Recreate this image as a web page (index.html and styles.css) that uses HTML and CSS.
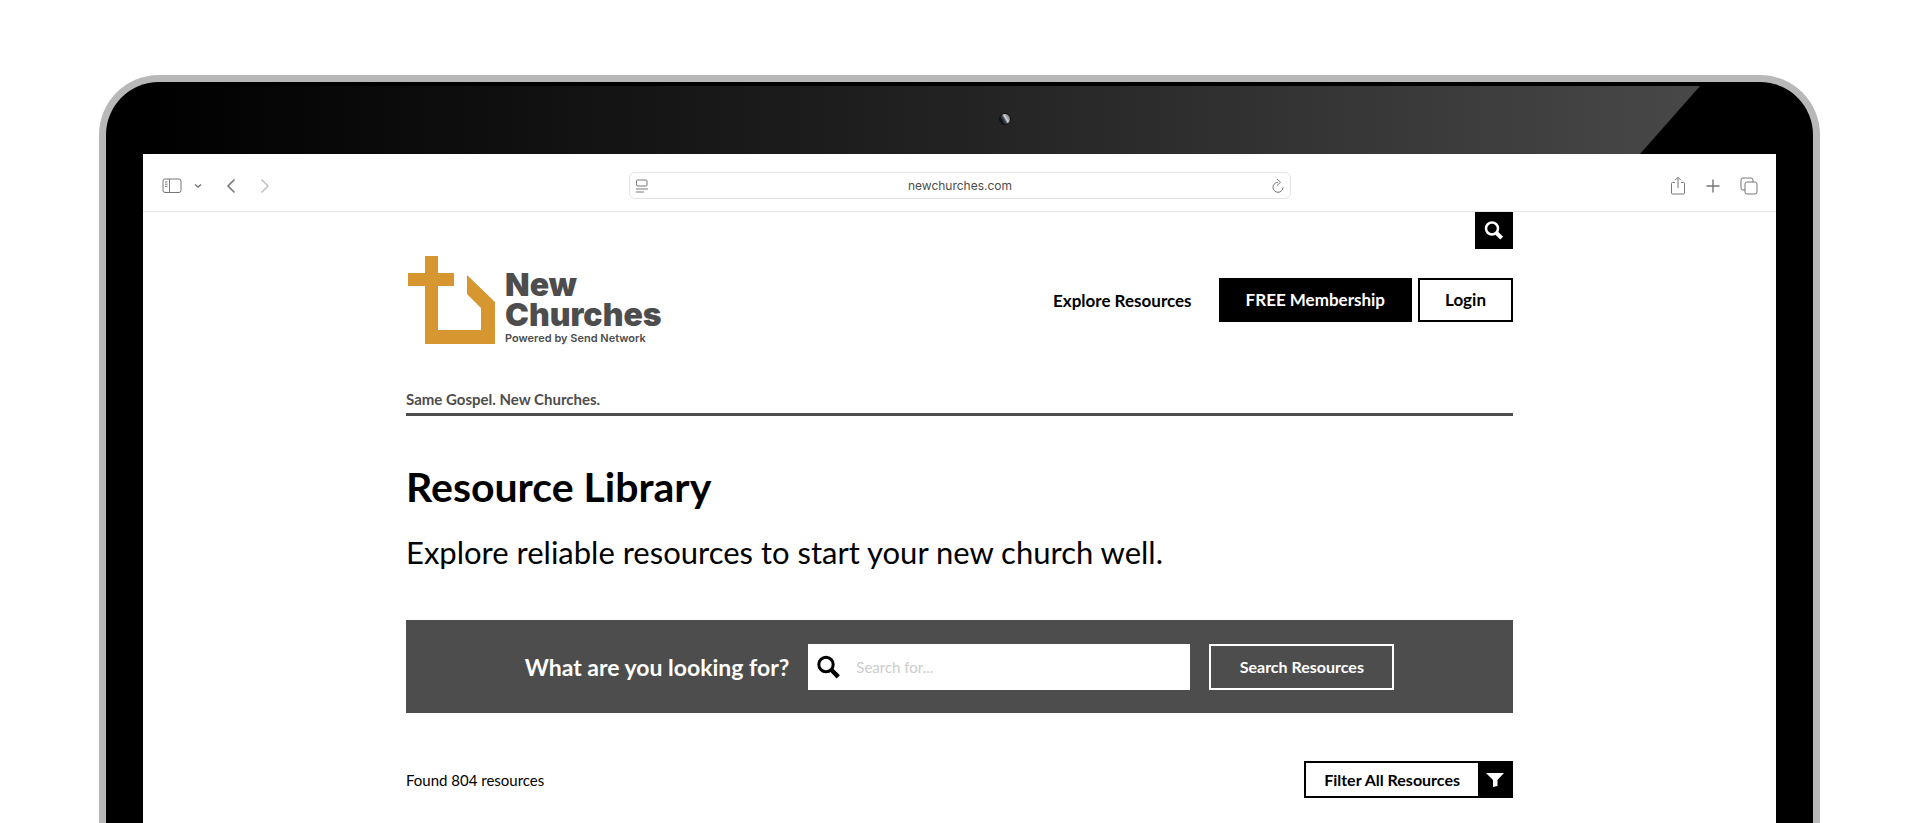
FILE: index.html
```html
<!DOCTYPE html>
<html lang="en">
<head>
  <meta charset="UTF-8">
  <meta name="viewport" content="width=device-width, initial-scale=1.0">
  <title>Resource Library - New Churches</title>
  <link rel="stylesheet" href="styles.css">
</head>
<body>
<div class="laptop">
  <div class="bezel">
    <div class="gloss"><span class="camera"></span></div>
  </div>

  <div class="screen">
    <!-- browser toolbar -->
    <div class="toolbar">
      <div class="tools tools-left">
        <button type="button" class="tool" aria-label="Sidebar">
          <svg width="20" height="16" viewBox="0 0 20 16"><rect x="1" y="1" width="18" height="13.5" rx="2"/><path d="M7.5 1v13.5M3 4h2.5M3 6.2h2.5M3 8.4h2.5"/></svg>
        </button>
        <button type="button" class="tool tool-chevron" aria-label="Tab groups">
          <svg width="8" height="6" viewBox="0 0 8 6"><path d="M1 1.5l3 2.5 3-2.5" stroke-width="1.5"/></svg>
        </button>
        <button type="button" class="tool tool-back" aria-label="Back">
          <svg width="10" height="16" viewBox="0 0 10 16"><path d="M8.5 1.5L2 8l6.5 6.5" stroke-width="1.6"/></svg>
        </button>
        <button type="button" class="tool tool-forward" aria-label="Forward">
          <svg width="10" height="16" viewBox="0 0 10 16"><path d="M1.5 1.5L8 8l-6.5 6.5" stroke-width="1.4"/></svg>
        </button>
      </div>
      <div class="address">
        <svg width="14" height="14" viewBox="0 0 14 14"><rect x="1.5" y="1" width="10.5" height="6" rx="1"/><path d="M1 10h12M1 13h8"/></svg>
        <input type="text" class="url" value="newchurches.com" aria-label="Address">
        <button type="button" class="tool" aria-label="Reload">
          <svg width="14" height="16" viewBox="0 0 14 16"><path d="M7 4.3A5 5 0 1 0 12 9.300M6 1l3.500 3.300L6 7.500"/></svg>
        </button>
      </div>
      <div class="tools tools-right">
        <button type="button" class="tool" aria-label="Share">
          <svg width="16" height="20" viewBox="0 0 16 20"><path d="M5 6.5H2.5a1 1 0 0 0-1 1v9.5a1 1 0 0 0 1 1h11a1 1 0 0 0 1-1V7.500a1 1 0 0 0-1-1H11M8 12V1.500M5 4.300l3-3 3 3"/></svg>
        </button>
        <button type="button" class="tool" aria-label="New tab">
          <svg width="14" height="14" viewBox="0 0 14 14"><path d="M7 .5v13M.5 7h13" stroke-width="1.4"/></svg>
        </button>
        <button type="button" class="tool" aria-label="Tabs">
          <svg width="18" height="18" viewBox="0 0 18 18"><path d="M5 13H3a2 2 0 0 1-2-2V3a2 2 0 0 1 2-2h8a2 2 0 0 1 2 2v2"/><rect x="5" y="5" width="12" height="12" rx="2"/></svg>
        </button>
      </div>
    </div>

    <div class="page">
      <div class="top-search">
        <button type="button" class="search-toggle" aria-label="Search">
          <svg width="20" height="20" viewBox="0 0 20 20"><circle cx="8" cy="7.5" r="6" stroke-width="2.5"/><path d="M12.500 12l5.200 5.200" stroke-width="4"/></svg>
        </button>
      </div>

      <header class="header">
        <a href="#" class="logo">
          <svg class="logo-mark" width="87" height="88" viewBox="0 0 87 88"><path d="M17 0h13v17h16v13H30v44h43V52L59 38V19l28 27v42H17V30H0V17h17z"/></svg>
          <span class="logo-text">
            <span class="logo-name">New<br>Churches</span>
            <span class="logo-sub">Powered by Send Network</span>
          </span>
        </a>
        <nav class="nav">
          <a href="#" class="nav-link">Explore Resources</a>
          <a href="#" class="btn btn-black">FREE Membership</a>
          <a href="#" class="btn">Login</a>
        </nav>
      </header>

      <p class="tagline">Same Gospel. New Churches.</p>

      <main>
        <h1>Resource Library</h1>
        <p class="intro">Explore reliable resources to start your new church well.</p>

        <form class="search-bar">
          <label for="search">What are you looking for?</label>
          <div class="search-field">
            <svg width="24" height="24" viewBox="0 0 24 24"><circle cx="9" cy="9.5" r="7.2" stroke-width="3"/><path d="M14.5 15l6.8 6.8" stroke-width="4.5"/></svg>
            <input type="text" id="search" name="search" placeholder="Search for...">
          </div>
          <button type="submit" class="search-submit">Search Resources</button>
        </form>

        <div class="results">
          <p>Found 804 resources</p>
          <button type="button" class="filter">
            <span class="filter-label">Filter All Resources</span>
            <span class="filter-icon">
              <svg width="18" height="16" viewBox="0 0 18 16"><path d="M0 1h18l-6.5 7v6L7 15V8z"/></svg>
            </span>
          </button>
        </div>
      </main>
    </div>
  </div>
</div>
</body>
</html>
```
FILE: styles.css
```css
* {
  box-sizing: border-box;
}
body {
  margin: 0;
  padding: 75px 100px 0 99px;
  min-height: 100vh;
  display: flex;
  background-color: #fff;
  font-family: Lato, "Open Sans", sans-serif;
  color: #000;
}
p,
h1 {
  margin: 0;
}
a {
  color: inherit;
  text-decoration: none;
}
button,
input {
  font-family: inherit;
}
button {
  cursor: pointer;
}

/* Laptop */
.laptop {
  flex: 1;
  display: flex;
  flex-direction: column;
  padding: 0 37px;
  border: 7px solid #b8b8b8;
  border-bottom: none;
  border-radius: 60px 60px 0 0;
  background-color: #000;
}
.bezel {
  padding: 4px 76px 0 0;
}
.gloss {
  height: 68px;
  padding: 27px 0 0 55%;
  background: linear-gradient(90deg, #000, #0c0c0c 18%, #222 52%, #3a3a3a 82%, #484848);
  clip-path: polygon(0 0, 100% 0, calc(100% - 60px) 100%, 0 100%);
}
.camera {
  display: block;
  width: 12px;
  height: 12px;
  border: 1px solid #111;
  border-radius: 50%;
  background: linear-gradient(60deg, #10151a 25%, #59616a 48%, #d5d9dc 56%, #444);
}
.screen {
  flex: 1;
  background-color: #fff;
}

/* Browser toolbar */
.toolbar {
  display: grid;
  grid-template-columns: 1fr 662px 1fr;
  align-items: center;
  height: 58px;
  padding: 6px 18px 0 19px;
  border-bottom: 1px solid #e4e4e4;
}
.toolbar svg {
  display: block;
  fill: none;
  stroke: #777;
}
.tools {
  display: flex;
  align-items: center;
}
.tools-right {
  justify-content: flex-end;
  gap: 20px;
}
.tool {
  padding: 0;
  border: none;
  background: none;
}
.tool-chevron {
  margin-left: 12px;
}
.tool-back {
  margin-left: 24px;
}
.tool-forward {
  margin-left: 24px;
}
.tool-forward svg {
  stroke: #bbb;
}
.address {
  display: flex;
  align-items: center;
  height: 27px;
  padding: 0 5px;
  border: 1px solid #e2e2e2;
  border-radius: 6px;
}
.url {
  flex: 1;
  min-width: 0;
  border: none;
  outline: none;
  background: none;
  font-family: Inter, sans-serif;
  font-size: 12px;
  text-align: center;
  color: #4d4d4d;
}

/* Page */
.page {
  width: 68%;
  max-width: 1107px;
  margin: 0 auto;
}
.top-search {
  display: flex;
  justify-content: flex-end;
}
.search-toggle {
  display: flex;
  align-items: center;
  justify-content: center;
  width: 38px;
  height: 37px;
  padding: 0;
  border: none;
  background-color: #000;
}
.search-toggle svg {
  fill: none;
  stroke: #fff;
}
.header {
  display: flex;
  justify-content: space-between;
  align-items: center;
  padding: 7px 0 0 2px;
}
.logo {
  display: flex;
  align-items: flex-end;
  gap: 10px;
}
.logo-mark {
  fill: #d69630;
}
.logo-text {
  color: #4d4d4d;
}
.logo-name {
  display: block;
  font-family: Inter, sans-serif;
  font-size: 32px;
  font-weight: 900;
  line-height: 30px;
}
.logo-sub {
  display: block;
  padding-top: 2px;
  font-family: Inter, sans-serif;
  font-size: 11px;
  font-weight: 600;
  line-height: 12px;
}
.nav {
  display: flex;
  align-items: center;
  gap: 6px;
}
.nav-link {
  margin-right: 21px;
  font-size: 17px;
  font-weight: bold;
}
.btn {
  height: 44px;
  padding: 0 25px;
  border: 2px solid #000;
  font-size: 17px;
  font-weight: bold;
  line-height: 40px;
}
.btn-black {
  background-color: #000;
  color: #fff;
}
.tagline {
  margin-top: 45px;
  padding-bottom: 4px;
  border-bottom: 3px solid #4d4d4d;
  font-size: 15px;
  font-weight: bold;
  line-height: 20px;
  color: #4d4d4d;
}
h1 {
  margin-top: 46px;
  font-size: 41px;
  line-height: 50px;
}
.intro {
  margin-top: 20px;
  font-size: 31px;
  line-height: 40px;
}

/* Search bar */
.search-bar {
  display: flex;
  align-items: center;
  justify-content: center;
  height: 93px;
  margin-top: 48px;
  background-color: #4d4d4d;
  color: #fff;
}
.search-bar label {
  font-size: 23px;
  font-weight: bold;
}
.search-field {
  display: flex;
  align-items: center;
  width: 382px;
  height: 46px;
  margin: 0 19px;
  padding: 0 9px;
  background-color: #fff;
}
.search-field svg {
  fill: none;
  stroke: #000;
}
.search-field input {
  flex: 1;
  min-width: 0;
  padding: 0 0 0 15px;
  border: none;
  outline: none;
  font-size: 15px;
}
.search-field input::placeholder {
  color: #ccc;
}
.search-submit {
  width: 185px;
  height: 46px;
  border: 2px solid #fff;
  background: none;
  font-size: 16px;
  font-weight: bold;
  color: #fff;
}

/* Results */
.results {
  display: flex;
  justify-content: space-between;
  align-items: center;
  margin-top: 48px;
  font-size: 15px;
}
.filter {
  display: flex;
  height: 37px;
  padding: 0;
  border: 2px solid #000;
  background-color: #fff;
  font-size: 16px;
  font-weight: bold;
  color: #000;
}
.filter-label {
  padding: 0 18px;
  line-height: 33px;
}
.filter-icon {
  display: flex;
  align-items: center;
  justify-content: center;
  width: 33px;
  height: 33px;
  background-color: #000;
}
.filter-icon svg {
  fill: #fff;
}
```
